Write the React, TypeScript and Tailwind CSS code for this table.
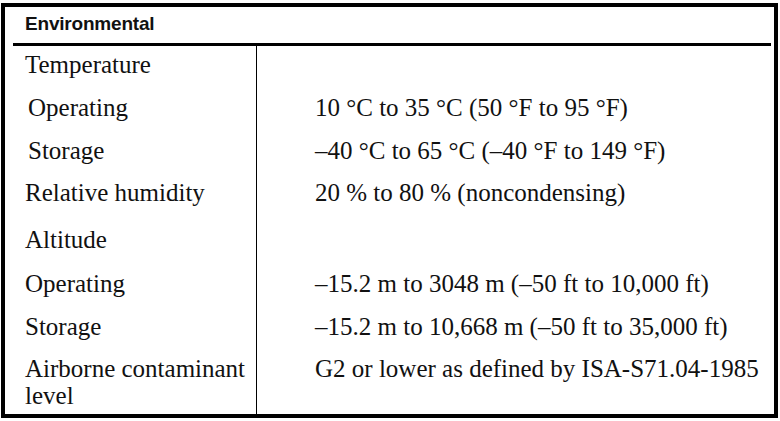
import React from "react";

type Row = { label: string; value?: string; h: string; indent?: boolean; pt?: string };

const rows: Row[] = [
  { label: "Temperature", h: "h-[48px]", pt: "pt-[5px]" },
  { label: "Operating", value: "10 °C to 35 °C (50 °F to 95 °F)", h: "h-[43px]", indent: true },
  { label: "Storage", value: "–40 °C to 65 °C (–40 °F to 149 °F)", h: "h-[42px]", indent: true },
  { label: "Relative humidity", value: "20 % to 80 % (noncondensing)", h: "h-[47px]" },
  { label: "Altitude", h: "h-[44px]" },
  { label: "Operating", value: "–15.2 m to 3048 m (–50 ft to 10,000 ft)", h: "h-[43px]" },
  { label: "Storage", value: "–15.2 m to 10,668 m (–50 ft to 35,000 ft)", h: "h-[42px]" },
];

export default function App() {
  return (
    <div className="w-[780px] h-[421px] bg-white overflow-hidden">
      <div className="ml-[1px] mt-[3px] w-[777px] h-[415px] border-4 border-black flex flex-col text-[#111]">
        <div className="h-[36px] pt-[5px] pl-[20px] [font-family:'Liberation_Sans',Arial,sans-serif] font-bold text-[19px] leading-[24px] tracking-[-0.2px]">
          Environmental
        </div>
        <div className="ml-[8px] mr-[3px] h-[3px] bg-black shrink-0" />
        <div className="flex-1 flex flex-col [font-family:'Liberation_Serif','Times_New_Roman',serif] text-[25px] leading-[27px]">
          {rows.map((r, i) => (
            <div key={i} className={`flex ${r.h} shrink-0`}>
              <div
                className={`w-[252px] border-r border-black ${r.indent ? "pl-[23px]" : "pl-[20px]"} ${r.pt ?? ""}`}
              >
                {r.label}
              </div>
              <div className={`flex-1 pl-[58px] ${r.pt ?? ""}`}>{r.value ?? ""}</div>
            </div>
          ))}
          <div className="flex flex-1">
            <div className="w-[252px] border-r border-black pl-[20px]">
              Airborne contaminant
              <br />
              level
            </div>
            <div className="flex-1 pl-[58px]">G2 or lower as defined by ISA-S71.04-1985</div>
          </div>
        </div>
      </div>
    </div>
  );
}
